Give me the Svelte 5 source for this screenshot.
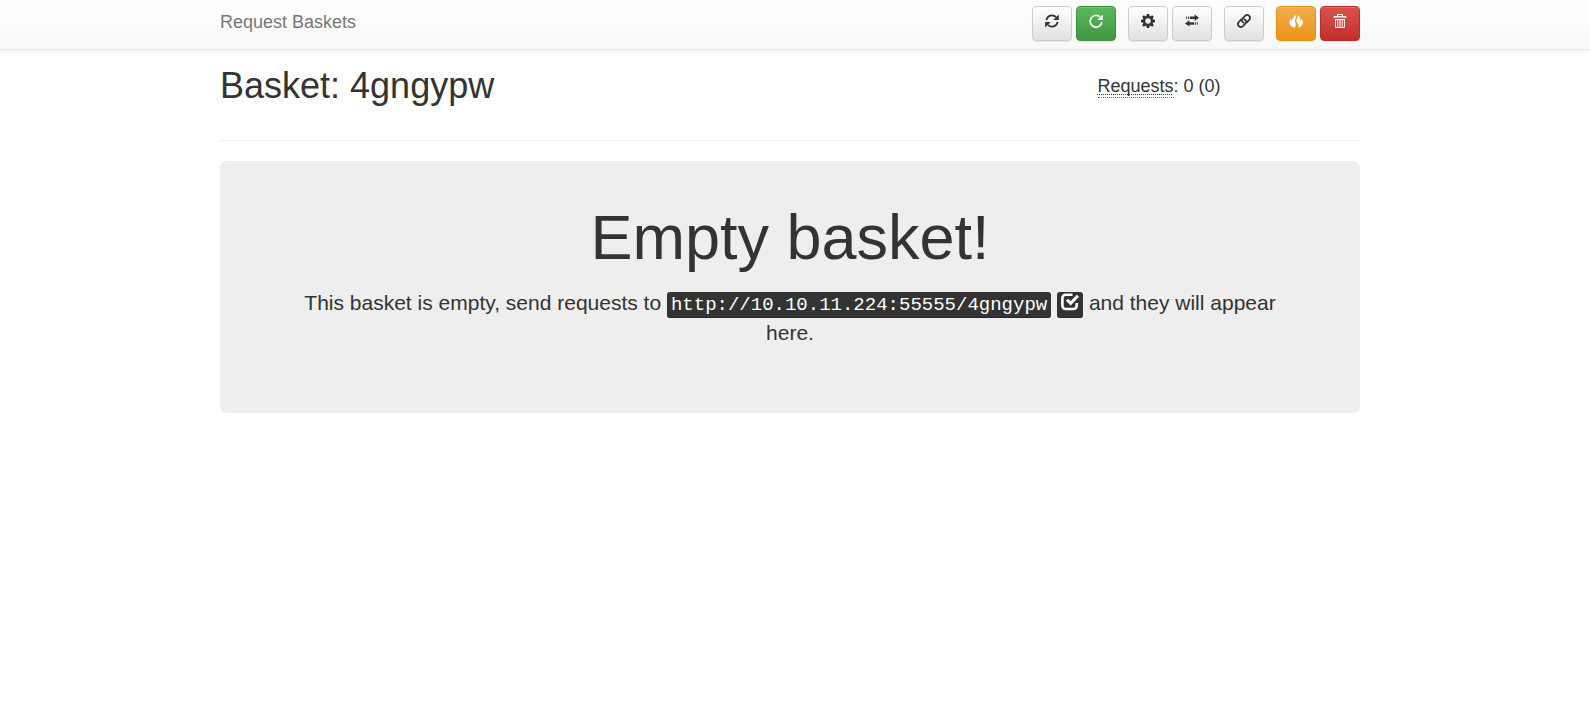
<script>
  const basket = '4gngypw';
  const url = `http://10.10.11.224:55555/${basket}`;
  const total = 0;
  const count = 0;

  const groups = [
    [
      { icon: 'refresh', kind: 'default', label: 'Refresh' },
      { icon: 'repeat', kind: 'success', label: 'Auto refresh' }
    ],
    [
      { icon: 'cog', kind: 'default', label: 'Settings' },
      { icon: 'transfer', kind: 'default', label: 'Responses' }
    ],
    [{ icon: 'link', kind: 'default', label: 'Share basket' }],
    [
      { icon: 'fire', kind: 'warning', label: 'Delete all requests' },
      { icon: 'trash', kind: 'danger', label: 'Destroy basket' }
    ]
  ];
</script>

{#snippet glyph(name)}
  <svg class="glyph" viewBox="0 0 14 14" aria-hidden="true">
    {#if name === 'refresh'}
      <path class="line" d="M1.4 6.2A5.6 5.6 0 0 1 11 3.1M12.6 7.8A5.6 5.6 0 0 1 3 10.9" />
      <path d="M13.8.4V6H8.2zM.2 13.6V8h5.600z" />
    {:else if name === 'repeat'}
      <path class="line" d="M10.800 2.700A5.900 5.900 0 1 0 12.900 8.300" />
      <path d="M13.800.4V6H8.200z" />
    {:else if name === 'cog'}
      <path
        fill-rule="evenodd"
        d="M5.800 0h2.400l.4 1.900 1 .4L11.200 1.200 12.800 2.800l-1.100 1.600.4 1 1.900.4v2.400l-1.900.4-.4 1 1.100 1.600-1.600 1.600-1.600-1.100-1 .4-.4 1.900H5.800l-.4-1.900-1-.4-1.600 1.100-1.600-1.600 1.100-1.600-.4-1L0 8.200V5.800l1.900-.4.4-1L1.200 2.800l1.600-1.600 1.600 1.100 1-.4zM7 4.300a2.700 2.700 0 1 0 0 5.400 2.700 2.700 0 0 0 0-5.400z"
      />
    {:else if name === 'transfer'}
      <path d="M9.600.5 14 3.700 9.600 6.900V5H5V2.600h4.600zM3.200 2.600h1V5h-1zM1.200 2.600h1V5h-1zM4.400 6.200 0 9.400l4.400 3.200v-1.900H9V8.300H4.400zM9.800 8.300h1v2.400h-1zM11.800 8.300h1v2.400h-1z" />
    {:else if name === 'link'}
      <g class="line">
        <path d="M9.400 8.900 12.200 5.900A2.900 2.900 0 0 0 8.100 1.800L5.600 4.400C4.300 5.800 4.700 7.300 6 8.200L7.300 8.900" />
        <path d="M4.600 5.100 1.800 8.100A2.900 2.900 0 0 0 5.900 12.200L8.400 9.600C9.700 8.200 9.300 6.700 8 5.800L6.700 5.100" />
      </g>
    {:else if name === 'fire'}
      <path d="M5.600 0c1.500 1.500 1.600 3.200.7 5.200-.8 1.600-.7 2.300 0 3.300.9 1.400.7 3.200-.8 5.300C3 13.300.6 11.200.5 8.500.4 7 .9 5.600 1.700 4.500c.1 1.300.4 2 1.100 2.600C2.800 4.200 6.300 3.600 5.600 0z" />
      <path d="M8.500.9c2.400 1.400 3.200 3.400 2.700 5.900.7-.3 1.100-.9 1.200-1.800 1.200 1.500 1.700 3.400 1.100 5.300-.7 1.900-2.400 3.200-4.600 3.500 1.100-1.800 1-3.200-.1-4.400C7.700 8.200 7.100 7.200 7.500 5.800 7.900 4.300 9.100 3.200 8.500.9z" />
    {:else if name === 'trash'}
      <path
        fill-rule="evenodd"
        d="M5 0h4a1 1 0 0 1 1 1v1h2.500a1 1 0 0 1 1 1v1H.5V3a1 1 0 0 1 1-1H4V1a1 1 0 0 1 1-1zm0 1v1h4V1zM1.500 3v.400h11V3zM2 5h10v8a1 1 0 0 1-1 1H3a1 1 0 0 1-1-1zm1 1v7h1.200V6zm2.200 0v7h1.200V6zm2.300 0v7h1.200V6zm2.200 0v7h1.300V6z"
      />
    {/if}
  </svg>
{/snippet}

<nav class="navbar">
  <div class="container bar">
    <a class="brand" href="#top">Request Baskets</a>
    <div class="toolbar">
      {#each groups as group}
        <div class="group">
          {#each group as item}
            <button type="button" class="btn {item.kind}" title={item.label} aria-label={item.label}>
              {@render glyph(item.icon)}
            </button>
          {/each}
        </div>
      {/each}
    </div>
  </div>
</nav>

<main>
  <div class="container">
    <header class="heading">
      <h1>Basket: {basket}</h1>
      <h4><abbr title="Current requests count (total count)">Requests</abbr>: {total} ({count})</h4>
    </header>
    <hr />
    <section class="jumbotron">
      <h1>Empty basket!</h1>
      <p>
        This basket is empty, send requests to <kbd>{url}</kbd>
        <a class="copy" href="#copy" aria-label="Copy link"><svg viewBox="0 0 18 18" aria-hidden="true">
            <path class="box" d="M11.500 1.700H4.700A3.300 3.300 0 0 0 1.400 5v7.700A3.300 3.300 0 0 0 4.700 16h7.700a3.300 3.300 0 0 0 3.300-3.300V10" />
            <path class="check" d="m6 6.700 3.600 3.600 7.300-7.600" />
          </svg></a>
        and they will appear here.
      </p>
    </section>
  </div>
</main>

<style>
  :global(body) {
    margin: 0;
    background: #fff;
    color: #333;
    font-family: "Nimbus Sans", "Liberation Sans", Arial, sans-serif;
    font-size: 14px;
    line-height: 20px;
  }

  .navbar,
  main {
    padding-right: 10px;
  }

  .container {
    box-sizing: border-box;
    max-width: 1170px;
    margin: 0 auto;
    padding: 0 15px;
  }

  .navbar {
    border-bottom: 1px solid #e7e7e7;
    background: linear-gradient(#fff, #f8f8f8);
    box-shadow: 0 1px 5px rgba(0, 0, 0, 0.075);
  }

  .bar {
    display: flex;
    justify-content: space-between;
    align-items: flex-start;
    padding-top: 6px;
    padding-bottom: 8px;
  }

  .brand {
    padding: 6px 0;
    color: #777;
    font-size: 18px;
    line-height: 20px;
    text-decoration: none;
  }

  .toolbar {
    display: flex;
    gap: 12px;
  }

  .group {
    display: flex;
    gap: 4px;
  }

  .btn {
    display: flex;
    box-sizing: border-box;
    width: 40px;
    height: 35px;
    padding: 7px 12px;
    border: 1px solid #ccc;
    border-radius: 4px;
    background: linear-gradient(#fff, #e0e0e0);
    box-shadow: inset 0 1px 0 rgba(255, 255, 255, 0.15), 0 1px 1px rgba(0, 0, 0, 0.075);
    color: #333;
    cursor: pointer;
  }

  .success {
    border-color: #3e8f3e;
    background: linear-gradient(#5cb85c, #419641);
    color: #fff;
  }

  .warning {
    border-color: #e38d13;
    background: linear-gradient(#f0ad4e, #eb9316);
    color: #fff;
  }

  .danger {
    border-color: #b92c28;
    background: linear-gradient(#d9534f, #c12e2a);
    color: #fff;
  }

  .glyph {
    flex: none;
    width: 14px;
    height: 14px;
    overflow: visible;
    fill: currentColor;
  }

  .line {
    fill: none;
    stroke: currentColor;
    stroke-width: 1.7;
  }

  h1,
  h4 {
    margin: 0;
    font-weight: 500;
  }

  .heading {
    display: grid;
    grid-template-columns: 3fr 1fr;
    align-items: start;
    margin: 0 -15px;
    padding: 16px 0 34px;
  }

  .heading h1 {
    padding: 0 15px;
    font-size: 36px;
    line-height: 40px;
  }

  h4 {
    padding: 10px 15px;
    font-size: 18px;
    line-height: 20px;
    font-weight: 400;
  }

  abbr {
    padding-bottom: 1px;
    border-bottom: 1px dotted #777;
    text-decoration: underline dotted;
    text-decoration-skip-ink: none;
    text-decoration-thickness: 1px;
    text-underline-offset: 2px;
    cursor: help;
  }

  hr {
    margin: 0 0 20px;
    border: 0;
    border-top: 1px solid #eee;
  }

  .jumbotron {
    padding: 48px 60px;
    border-radius: 6px;
    background: #eee;
    text-align: center;
  }

  .jumbotron h1 {
    margin-bottom: 22px;
    font-size: 63px;
    line-height: 57px;
  }

  p {
    margin: 0 0 17px;
    font-size: 21px;
    line-height: 30px;
  }

  kbd,
  .copy {
    padding: 2px 4px;
    border-radius: 3px;
    background: #333;
    box-shadow: inset 0 -1px 0 rgba(0, 0, 0, 0.25);
    color: #fff;
    font-family: "Liberation Mono", monospace;
    font-size: 19px;
    line-height: 20px;
  }

  .copy svg {
    width: 18px;
    height: 18px;
    vertical-align: -1px;
    fill: none;
    stroke: currentColor;
  }

  .box {
    stroke-width: 2.6;
  }

  .check {
    stroke-width: 3;
  }
</style>
